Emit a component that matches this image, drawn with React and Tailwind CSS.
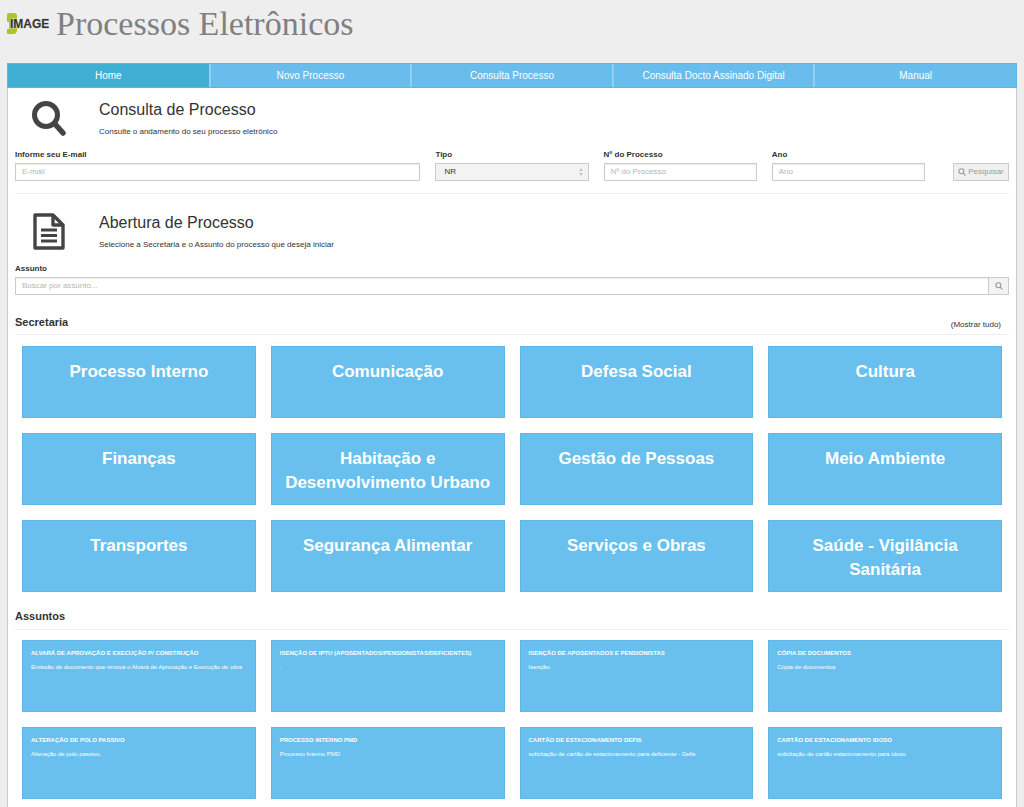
import React from 'react';

const navItems = ['Home', 'Novo Processo', 'Consulta Processo', 'Consulta Docto Assinado Digital', 'Manual'];

const secretarias = [
  'Processo Interno',
  'Comunicação',
  'Defesa Social',
  'Cultura',
  'Finanças',
  'Habitação e Desenvolvimento Urbano',
  'Gestão de Pessoas',
  'Meio Ambiente',
  'Transportes',
  'Segurança Alimentar',
  'Serviços e Obras',
  'Saúde - Vigilância Sanitária',
];

const assuntos = [
  { title: 'ALVARÁ DE APROVAÇÃO E EXECUÇÃO P/ CONSTRUÇÃO', text: 'Emissão de documento que renova o Alvará de Aprovação e Execução de obra' },
  { title: 'ISENÇÃO DE IPTU (APOSENTADOS/PENSIONISTAS/DEFICIENTES)', text: '.' },
  { title: 'ISENÇÃO DE APOSENTADOS E PENSIONISTAS', text: 'Isenção' },
  { title: 'CÓPIA DE DOCUMENTOS', text: 'Cópia de documentos' },
  { title: 'ALTERAÇÃO DE POLO PASSIVO', text: 'Alteração de polo passivo.' },
  { title: 'PROCESSO INTERNO PMD', text: 'Processo Interno PMD' },
  { title: 'CARTÃO DE ESTACIONAMENTO DEFIS', text: 'solicitação de cartão de estacionamento para deficiente - Defis' },
  { title: 'CARTÃO DE ESTACIONAMENTO IDOSO', text: 'solicitação de cartão estacionamento para idoso' },
];

const inputClass =
  'block w-full h-[18px] px-1.5 pb-0.5 border border-[#ccc] bg-white text-[8px] text-[#444] placeholder:text-[#b5b5b5] shadow-[inset_0_1px_1px_rgba(0,0,0,0.08)] outline-none';

const Logo = () => (
  <svg viewBox="0 0 42 24" className="w-[42px] h-6 shrink-0" role="img" aria-label="Image">
    <path d="M2 1h5q3 0 3 3v14q0 4-4 4H1q-1 0-1-1v-4h2V10H1Q0 10 0 9V3q0-2 2-2z" fill="#a9c71e" />
    <text
      x="3"
      y="16"
      fontFamily="Liberation Sans, Arial, sans-serif"
      fontWeight="700"
      fontSize="12"
      fill="#333"
      stroke="#d5d8cc"
      strokeWidth="1"
      paintOrder="stroke"
    >
      IMAGE
    </text>
  </svg>
);

const SearchIcon = ({ className }) => (
  <svg viewBox="0 0 34 37" className={className} fill="none" stroke="currentColor" strokeLinecap="round">
    <circle cx="14" cy="15" r="11.5" strokeWidth="5" />
    <path d="M23 24l8 9" strokeWidth="5.5" />
  </svg>
);

const DocIcon = () => (
  <svg viewBox="0 0 32 37" className="w-8 h-[37px]" fill="none" stroke="#444" strokeWidth="3.4" strokeLinejoin="round">
    <path d="M2 2h18l10 10v23H2z" />
    <path d="M20 2v10h10" />
    <path d="M8 17h16M8 22.5h16M8 28h16" strokeWidth="2.8" />
  </svg>
);

const Field = ({ id, label, className, children }) => (
  <div className={className}>
    <label htmlFor={id} className="block mb-[3px] text-[8px] leading-[10px] font-bold">
      {label}
    </label>
    {children}
  </div>
);

const SectionIntro = ({ icon, title, text }) => (
  <div className="flex items-start h-12">
    <div className="w-[84px] shrink-0 flex justify-center pt-1 pr-4">{icon}</div>
    <div className="pt-0.5">
      <h2 className="text-[16px] leading-6">{title}</h2>
      <p className="mt-0.5 text-[8px] leading-4">{text}</p>
    </div>
  </div>
);

export default function App() {
  return (
    <div className="min-h-screen flex flex-col bg-[#eee] px-[7px] text-[#333] font-['Liberation_Sans',Arial,sans-serif]">
      <header className="flex items-center h-[47px] mb-4 gap-[7px]">
        <Logo />
        <h1 className="text-[34px] leading-[47px] text-[#808080] font-['Liberation_Serif','Times_New_Roman',serif]">
          Processos Eletrônicos
        </h1>
      </header>

      <nav className="grid grid-cols-5 h-[25px] border border-[#5fb4e2] bg-[#69bdec]">
        {navItems.map((item, i) => (
          <a
            key={item}
            href="#"
            className={`flex items-center justify-center text-[10px] text-white border-r border-[#95d2f3] last:border-r-0 ${
              i === 0 ? 'bg-[#3fb0d4]' : 'border-l border-l-[#8dcdf1]'
            }`}
          >
            {item}
          </a>
        ))}
      </nav>

      <main className="grow bg-white border-x border-[#ccc] px-[7px] pb-2">
        <section className="pt-2">
          <SectionIntro
            icon={<SearchIcon className="w-[34px] h-[37px] text-[#444]" />}
            title="Consulta de Processo"
            text="Consulte o andamento do seu processo eletrônico"
          />
          <form className="grid grid-cols-12 gap-x-[15px] items-end mt-1.5 pb-3 border-b border-[#eee]">
            <Field id="email" label="Informe seu E-mail" className="col-span-5">
              <input id="email" type="email" placeholder="E-mail" className={inputClass} />
            </Field>
            <Field id="tipo" label="Tipo" className="col-span-2">
              <div className="relative">
                <select
                  id="tipo"
                  className="block appearance-none w-full h-[18px] px-2 border border-[#ccc] bg-[#f3f3f3] text-[8px] leading-[14px] outline-none"
                >
                  <option>NR</option>
                </select>
                <svg viewBox="0 0 4 8" className="absolute right-1.5 top-[5px] w-1 h-2 pointer-events-none" fill="#c4c4c4">
                  <path d="M2 0l2 3H0zM2 8l2-3H0z" />
                </svg>
              </div>
            </Field>
            <Field id="numero" label="Nº do Processo" className="col-span-2">
              <input id="numero" type="text" placeholder="Nº do Processo" className={inputClass} />
            </Field>
            <Field id="ano" label="Ano" className="col-span-2">
              <input id="ano" type="text" placeholder="Ano" className={inputClass} />
            </Field>
            <button
              type="button"
              className="justify-self-end flex items-center justify-center gap-0.5 w-14 h-[18px] border border-[#ccc] bg-[#f0f0f0] text-[8px] text-[#999]"
            >
              <SearchIcon className="w-2 h-2" />
              Pesquisar
            </button>
          </form>
        </section>

        <section className="pt-[15px]">
          <SectionIntro
            icon={<DocIcon />}
            title="Abertura de Processo"
            text="Selecione a Secretaria e o Assunto do processo que deseja iniciar"
          />
          <div className="mt-[7px]">
            <Field id="assunto" label="Assunto">
              <div className="flex">
                <input id="assunto" type="text" placeholder="Buscar por assunto..." className={inputClass} />
                <button
                  type="button"
                  aria-label="Buscar"
                  className="flex items-center justify-center w-5 h-[18px] shrink-0 border border-l-0 border-[#ccc] bg-[#f3f3f3] text-[#999]"
                >
                  <SearchIcon className="w-2 h-2" />
                </button>
              </div>
            </Field>
          </div>
        </section>

        <section className="mt-5">
          <div className="flex items-center justify-between h-5 border-b border-[#eee]">
            <h3 className="text-[11px] leading-[14px] font-bold pb-1.5">Secretaria</h3>
            <a href="#" className="pr-2 text-[8px]">
              (Mostrar tudo)
            </a>
          </div>
          <div className="grid grid-cols-4 gap-[15px] px-[7px] pt-[11px]">
            {secretarias.map((name) => (
              <button
                key={name}
                type="button"
                className="flex items-start justify-center h-[72px] px-2 pt-[13px] border border-[#5db6e4] bg-[#69c0ee] text-[17px] leading-6 font-bold text-white"
              >
                {name}
              </button>
            ))}
          </div>
        </section>

        <section className="mt-[17px]">
          <h3 className="h-[21px] text-[11px] leading-[14px] font-bold border-b border-[#eee]">Assuntos</h3>
          <div className="grid grid-cols-4 gap-[15px] px-[7px] pt-2.5">
            {assuntos.map(({ title, text }) => (
              <button
                key={title}
                type="button"
                className="flex flex-col items-start h-[72px] px-2 pt-2 border border-[#5db6e4] bg-[#69c0ee] text-left text-[6px] leading-2 text-white"
              >
                <strong className="font-bold whitespace-nowrap">{title}</strong>
                <span className="mt-1.5">{text}</span>
              </button>
            ))}
          </div>
        </section>
      </main>
    </div>
  );
}
